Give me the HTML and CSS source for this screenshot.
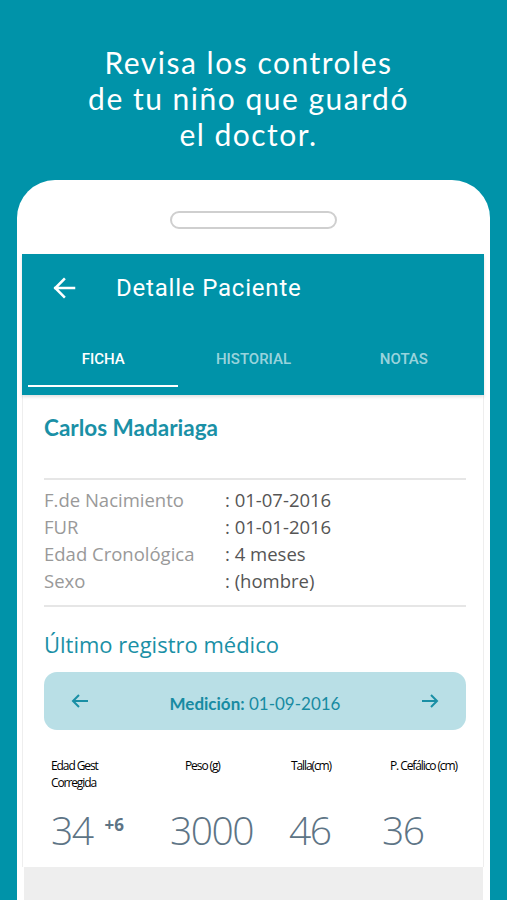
FILE: index.html
```html
<!DOCTYPE html>
<html lang="es">
<head>
  <meta charset="UTF-8">
  <title>Detalle Paciente</title>
  <link rel="stylesheet" href="styles.css">
</head>
<body>
  <h1 class="headline">Revisa los controles<br>de tu niño que guardó<br>el doctor.</h1>

  <div class="phone">
    <div class="notch"></div>
    <div class="screen">
      <header class="app-bar">
        <div class="toolbar">
          <svg class="back" viewBox="0 0 24 24" width="30" height="30">
            <path d="M20 12H5M12 5l-7 7 7 7" fill="none" stroke="#fff" stroke-width="2" stroke-linecap="square"/>
          </svg>
          <span class="title">Detalle Paciente</span>
        </div>
        <nav class="tabs">
          <div class="tab active">FICHA</div>
          <div class="tab">HISTORIAL</div>
          <div class="tab">NOTAS</div>
        </nav>
      </header>

      <main class="content">
        <h2 class="name">Carlos Madariaga</h2>
        <hr class="divider">
        <div class="info">
          <span class="label">F.de Nacimiento</span><span class="value">: 01-07-2016</span>
          <span class="label">FUR</span><span class="value">: 01-01-2016</span>
          <span class="label">Edad Cronológica</span><span class="value">: 4 meses</span>
          <span class="label">Sexo</span><span class="value">: (hombre)</span>
        </div>
        <hr class="divider divider-bottom">

        <h3 class="section-title">Último registro médico</h3>
        <div class="measure-nav">
          <svg class="nav-arrow" viewBox="0 0 20 16" width="20" height="16">
            <path d="M18 8H3M9 2L3 8l6 6" fill="none" stroke="#1a8fa5" stroke-width="2"/>
          </svg>
          <span class="measure-date"><b>Medición:</b> 01-09-2016</span>
          <svg class="nav-arrow" viewBox="0 0 20 16" width="20" height="16">
            <path d="M2 8h15M11 2l6 6-6 6" fill="none" stroke="#1a8fa5" stroke-width="2"/>
          </svg>
        </div>

        <div class="stat-labels">
          <span>Edad Gest<br>Corregida</span>
          <span>Peso (g)</span>
          <span>Talla(cm)</span>
          <span>P. Cefálico (cm)</span>
        </div>
        <div class="stat-values">
          <span>34<sup>+6</sup></span>
          <span>3000</span>
          <span>46</span>
          <span>36</span>
        </div>
      </main>
      <div class="footer"></div>
    </div>
  </div>
</body>
</html>
```

FILE: styles.css
```css
:root {
  --teal: #0093a9;
  --teal-text: #1a90a6;
  --pill: #b9dfe6;
  --label: #999;
  --value: #555;
  --stat: #5d7485;
}

* {
  margin: 0;
  padding: 0;
  box-sizing: border-box;
}

body {
  width: 507px;
  height: 900px;
  overflow: hidden;
  background: var(--teal);
  font-family: "Open Sans", sans-serif;
}

.headline {
  padding: 44px 10px 0 0;
  text-align: center;
  color: #fff;
  font-family: Lato, sans-serif;
  font-weight: 400;
  font-size: 30px;
  line-height: 36px;
  letter-spacing: 1.5px;
}

.phone {
  margin: 28px 17px 0 17px;
  padding: 31px 6px 0 5px;
  background: #fff;
  border-radius: 38px 38px 0 0;
}

.notch {
  width: 167px;
  height: 18px;
  margin: 0 auto 25px;
  border: 2px solid #cfcfcf;
  border-radius: 9px;
}

.app-bar {
  background: var(--teal);
  padding-bottom: 8px;
  box-shadow: 0 2px 3px rgba(0, 0, 0, 0.12);
  position: relative;
}

.toolbar {
  height: 68px;
  display: flex;
  align-items: center;
  padding-left: 27px;
}

.back {
  margin-right: 37px;
}

.title {
  font-family: Roboto, sans-serif;
  font-size: 24px;
  color: #fff;
  letter-spacing: 0.8px;
}

.tabs {
  display: grid;
  grid-template-columns: repeat(3, 1fr);
  margin: 0 5px 0 6px;
}

.tab {
  height: 65px;
  padding-top: 28px;
  text-align: center;
  font-family: Roboto, sans-serif;
  font-weight: 500;
  font-size: 15px;
  color: rgba(255, 255, 255, 0.62);
  border-bottom: 2px solid transparent;
}

.tab.active {
  color: #fff;
  border-bottom-color: #fff;
}

.content {
  height: 472px;
  padding: 20px 17px 0 21px;
  border-left: 1px solid #eee;
  border-right: 1px solid #eee;
}

.name {
  font-family: Lato, sans-serif;
  font-weight: 700;
  font-size: 22.5px;
  line-height: 26px;
  color: var(--teal-text);
}

.divider {
  border: none;
  border-top: 2px solid #e6e6e6;
  margin-top: 37px;
}

.divider-bottom {
  margin-top: 11px;
}

.info {
  display: grid;
  grid-template-columns: 181px auto;
  margin-top: 6px;
  font-size: 18.5px;
  line-height: 27px;
}

.label {
  color: var(--label);
}

.value {
  color: var(--value);
}

.section-title {
  margin-top: 24px;
  font-weight: 400;
  font-size: 22px;
  line-height: 27px;
  color: var(--teal-text);
}

.measure-nav {
  margin-top: 14px;
  height: 58px;
  background: var(--pill);
  border-radius: 13px;
  display: flex;
  align-items: center;
  justify-content: space-between;
  padding: 0 26px 0 26px;
}

.measure-date {
  font-family: Lato, sans-serif;
  font-size: 17px;
  color: #178ba2;
  padding-top: 5px;
}

.measure-date b {
  font-weight: 700;
}

.stat-labels {
  display: grid;
  grid-template-columns: 134px 106px 99px auto;
  margin-top: 27px;
  padding-left: 7px;
  font-size: 12px;
  font-weight: 500;
  line-height: 17px;
  letter-spacing: -1.1px;
  color: #000;
}

.stat-values {
  display: grid;
  grid-template-columns: 119px 119px 93px auto;
  margin-top: 17px;
  padding-left: 7px;
  font-weight: 300;
  font-size: 39px;
  line-height: 44px;
  letter-spacing: -1.5px;
  color: var(--stat);
}

.stat-values sup {
  font-weight: 700;
  font-size: 17px;
  line-height: 0;
  letter-spacing: 0;
  margin-left: 12px;
  vertical-align: 14px;
}

.footer {
  height: 40px;
  background: #eeeeee;
  margin: 0 1px 0 2px;
}
```
